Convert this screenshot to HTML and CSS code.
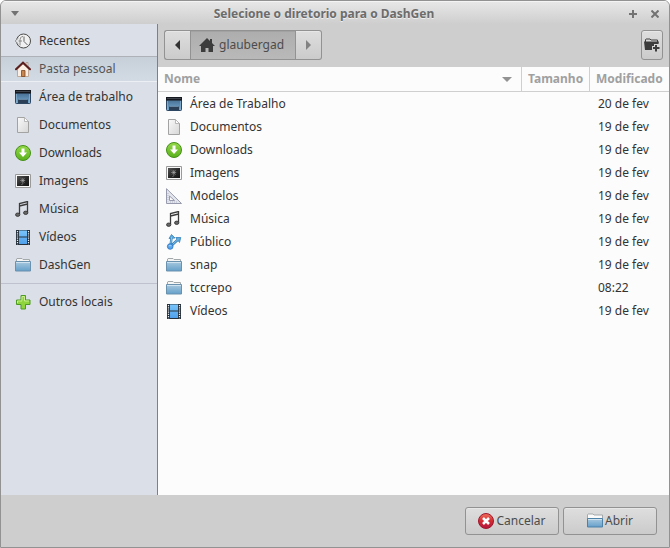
FILE: index.html
```html
<!DOCTYPE html>
<html lang="pt-BR">
<head>
<meta charset="utf-8">
<title>Selecione o diretorio para o DashGen</title>
<link rel="stylesheet" href="styles.css">
</head>
<body>
<svg class="sprite" width="0" height="0" aria-hidden="true">
  <defs>
    <linearGradient id="g-blue" x2="0" y2="1"><stop offset="0" stop-color="#3f6287"/><stop offset="1" stop-color="#74a9cf"/></linearGradient>
    <linearGradient id="g-folder" x2="0" y2="1"><stop offset="0" stop-color="#a9c9df"/><stop offset="1" stop-color="#65a0ca"/></linearGradient>
    <linearGradient id="g-green" x2="0" y2="1"><stop offset="0" stop-color="#97d94a"/><stop offset="1" stop-color="#58b01b"/></linearGradient>
    <linearGradient id="g-red" x2="0" y2="1"><stop offset="0" stop-color="#f0705c"/><stop offset=".5" stop-color="#d22c32"/><stop offset="1" stop-color="#b3153f"/></linearGradient>
    <linearGradient id="g-paper" x2="1" y2="1"><stop offset="0" stop-color="#fafafa"/><stop offset="1" stop-color="#d6d6d6"/></linearGradient>
    <linearGradient id="g-film" x2="0" y2="1"><stop offset="0" stop-color="#79c4fa"/><stop offset="1" stop-color="#4fa0ec"/></linearGradient>
    <linearGradient id="g-dark" x2="1" y2="1"><stop offset="0" stop-color="#555"/><stop offset=".5" stop-color="#292929"/><stop offset="1" stop-color="#151515"/></linearGradient>
  </defs>
  <symbol id="recent" viewBox="0 0 16 16">
    <circle cx="8.500" cy="8" r="7" fill="#f1f1f1" stroke="#4a4a4a"/>
    <path d="M9 3.500v5l3.500 3.500" fill="none" stroke="#666"/>
    <path d="M8 3.500C5.500 3.500 5 5.500 5 8v4.500M3 8h4" fill="none" stroke="#888"/>
    <path d="M3.500 5L0 8l3.500 3" fill="#e4e6ea" stroke="#888" stroke-width=".8"/>
  </symbol>
  <symbol id="home" viewBox="0 0 16 16">
    <path d="M11 1.500h2V7h-2z" fill="#e8d9cd" stroke="#9b8578" stroke-width=".6"/>
    <path d="M2.500 8L8 2.500 13.500 8v7.500h-11z" fill="#fbefe3" stroke="#b99b86" stroke-width=".8"/>
    <path d="M6.500 9.500h3.500v6H6.500z" fill="#c8854d" stroke="#7b4726" stroke-width=".8"/>
    <path d="M1 8.300L8 1.700l7 6.600" fill="none" stroke="#5d1f1d" stroke-width="2" stroke-linecap="round"/>
  </symbol>
  <symbol id="desktop" viewBox="0 0 16 16">
    <rect x=".5" y="1.500" width="15" height="13" rx=".8" fill="url(#g-blue)" stroke="#2d4763"/>
    <path d="M0 1h16v3.500H0z" fill="#15191f"/>
    <path d="M1 2.500h14" stroke="#50565f" stroke-width=".7"/>
    <path d="M1.500 5v9M14.500 5v9" stroke="#84afd0" stroke-width=".8"/>
    <path d="M3 10.500h10V14H3z" fill="#2b4057"/>
    <path d="M3.500 10.500h9" stroke="#7796b0" stroke-width=".7"/>
  </symbol>
  <symbol id="document" viewBox="0 0 16 16">
    <path d="M2.500.5h7l4 4v11h-11z" fill="url(#g-paper)" stroke="#a3a3a3"/>
    <path d="M9.500.8v3.700h3.700" fill="#fff" stroke="#aaa" stroke-width=".8"/>
  </symbol>
  <symbol id="download" viewBox="0 0 16 16">
    <circle cx="8" cy="8" r="7.500" fill="url(#g-green)" stroke="#459018"/>
    <path d="M6.500 3.500h3v4H12l-4 4.500-4-4.500h2.500z" fill="#fff"/>
  </symbol>
  <symbol id="image" viewBox="0 0 16 16">
    <path d="M.5 1.500h15v13H.5z" fill="#f8f8f8" stroke="#9a9a9a"/>
    <path d="M2 3h12v10H2z" fill="url(#g-dark)"/>
    <path d="M6 5.500l3.500 4M9.500 5.500L6 9.500M5.200 7.500h5M7.800 5v5.500L6.500 12" stroke="#b0b0b0" stroke-width=".6" fill="none"/>
  </symbol>
  <symbol id="music" viewBox="0 0 16 16">
    <path d="M4.500 13V2.500l8-2v10.700M4.500 5l8-2" fill="none" stroke="#3c3c3c" stroke-width="1.300"/>
    <ellipse cx="2.700" cy="13.700" rx="2.200" ry="1.700" fill="#666" stroke="#2c2c2c" stroke-width=".8"/>
    <ellipse cx="10.700" cy="11.800" rx="2.200" ry="1.700" fill="#666" stroke="#2c2c2c" stroke-width=".8"/>
  </symbol>
  <symbol id="video" viewBox="0 0 16 16">
    <path d="M1 1h14v15H1z" fill="#26313c"/>
    <path d="M4 1.500h8v6H4zM4 8.500h8V15H4z" fill="url(#g-film)"/>
    <path d="M2.500 2v13.500M13.500 2v13.500" stroke="#eee" stroke-width="1.200" stroke-dasharray="1.200 1"/>
  </symbol>
  <symbol id="folder" viewBox="0 0 16 16">
    <path d="M1.500 6V2l.5-.5h5L8 2.500h6.500V6z" fill="#f5f5f5" stroke="#a3a8ab"/>
    <path d="M.5 4.500h15v9.500H.5z" fill="url(#g-folder)" stroke="#6a91ad"/>
    <path d="M1 5.500h14" stroke="#cfe2ef"/>
  </symbol>
  <symbol id="open-folder" viewBox="0 0 16 16">
    <path d="M.5 8V1.500L1 1h5l1 1h8.500v6z" fill="#fafafa" stroke="#a3a8ab"/>
    <path d="M.5 5.500h15v8.500H.5z" fill="url(#g-folder)" stroke="#4c81a8"/>
    <path d="M1 6.500h14" stroke="#cfe2ef"/>
  </symbol>
  <symbol id="plus" viewBox="0 0 16 16">
    <path d="M6 1.500h4.500V6H15v4.500h-4.500V15H6v-4.500H1.500V6H6z" fill="#8fd43c" stroke="#4c9a24" stroke-linejoin="round"/>
    <path d="M7 6.500V2.500h2.500V7H14M2.500 9V7H7" fill="none" stroke="#c8f08d"/>
  </symbol>
  <symbol id="template" viewBox="0 0 16 16">
    <path fill-rule="evenodd" d="M.5.7v14.800h15zM3.500 8v4.500h5z" fill="#e4e6ee" stroke="#989bad"/>
    <path d="M2 5v8.500M4 14h7" stroke="#b4b7c5" stroke-dasharray="1 1"/>
  </symbol>
  <symbol id="share" viewBox="0 0 16 16">
    <path d="M4.500 12L5.500 4M5 12l6.500-6" stroke="#3a83b9" stroke-width="2.400"/>
    <path d="M3 4.500L5.500.500l3.500 3.500zM9.800 3.500h5L13.500 8.500z" fill="#5cabdf" stroke="#3a83b9" stroke-width=".8"/>
    <path d="M4.700 10L5.700 3M5 12l7.500-7" stroke="#83c6ec"/>
    <circle cx="4.200" cy="12.500" r="2.800" fill="#5aa6ed" stroke="#246fc0" stroke-width=".8"/>
    <path d="M2.800 11.700h2.700" stroke="#a8d3fa"/>
  </symbol>
  <symbol id="cancel" viewBox="0 0 16 16">
    <circle cx="8" cy="8" r="7.500" fill="url(#g-red)" stroke="#9f182d"/>
    <path d="M5 5l6 6M11 5l-6 6" stroke="#fff" stroke-width="2.500"/>
  </symbol>
  <symbol id="home-dark" viewBox="0 0 16 16">
    <path d="M8 1l3 3V2h2v4l3 3h-2v6H9.500v-4h-3v4H2V9H0z" fill="#3c3c3c"/>
  </symbol>
  <symbol id="new-folder" viewBox="0 0 16 16">
    <path d="M1.500 5V2.500L2 2h4l1 1h6.500v2" fill="none" stroke="#3c3c3c"/>
    <path d="M0 4.500h15L14.500 7H10v2H8v4H1z" fill="#3c3c3c"/>
    <path d="M11 8h2v2h2.500v2H13v2.500h-2V12H9v-2h2z" fill="#3c3c3c"/>
  </symbol>
</svg>

<div class="window">
  <header class="titlebar">
    <button class="window-button" aria-label="Menu da janela"><svg width="8" height="5" viewBox="0 0 8 5"><path d="M0 0h8L4 5z" fill="currentColor"/></svg></button>
    <h1>Selecione o diretorio para o DashGen</h1>
    <div class="window-actions">
      <button class="window-button" aria-label="Maximizar"><svg width="8" height="8" viewBox="0 0 8 8"><path d="M4 0v8M0 4h8" stroke="currentColor" stroke-width="2"/></svg></button>
      <button class="window-button" aria-label="Fechar"><svg width="8" height="8" viewBox="0 0 8 8"><path d="M.5.500l7 7M7.500.500l-7 7" stroke="currentColor" stroke-width="2"/></svg></button>
    </div>
  </header>

  <div class="content">
    <nav class="places" aria-label="Locais">
      <a href="#"><svg class="icon"><use href="#recent"/></svg>Recentes</a>
      <a href="#" class="current" aria-current="page"><svg class="icon"><use href="#home"/></svg>Pasta pessoal</a>
      <a href="#"><svg class="icon"><use href="#desktop"/></svg>Área de trabalho</a>
      <a href="#"><svg class="icon"><use href="#document"/></svg>Documentos</a>
      <a href="#"><svg class="icon"><use href="#download"/></svg>Downloads</a>
      <a href="#"><svg class="icon"><use href="#image"/></svg>Imagens</a>
      <a href="#"><svg class="icon"><use href="#music"/></svg>Música</a>
      <a href="#"><svg class="icon"><use href="#video"/></svg>Vídeos</a>
      <a href="#"><svg class="icon"><use href="#folder"/></svg>DashGen</a>
      <hr>
      <a href="#"><svg class="icon"><use href="#plus"/></svg>Outros locais</a>
    </nav>

    <main class="browser">
      <div class="toolbar">
        <div class="path-bar">
          <button class="path-arrow" aria-label="Anterior"><svg width="5" height="10" viewBox="0 0 5 10"><path d="M5 0v10L0 5z" fill="currentColor"/></svg></button>
          <button class="path-current"><svg class="icon"><use href="#home-dark"/></svg>glaubergad</button>
          <button class="path-arrow" aria-label="Próximo" disabled><svg width="5" height="10" viewBox="0 0 5 10"><path d="M0 0v10l5-5z" fill="currentColor"/></svg></button>
        </div>
        <button class="create-folder" aria-label="Criar pasta"><svg class="icon"><use href="#new-folder"/></svg></button>
      </div>

      <div class="file-list">
        <table>
          <colgroup><col><col class="col-size"><col class="col-date"></colgroup>
          <thead>
            <tr>
              <th scope="col" aria-sort="ascending"><div class="sorted">Nome<svg width="10" height="5" viewBox="0 0 10 5"><path d="M0 0h10L5 5z" fill="currentColor"/></svg></div></th>
              <th scope="col">Tamanho</th>
              <th scope="col">Modificado</th>
            </tr>
          </thead>
          <tbody>
            <tr><td><div class="file"><svg class="icon"><use href="#desktop"/></svg>Área de Trabalho</div></td><td></td><td>20 de fev</td></tr>
            <tr><td><div class="file"><svg class="icon"><use href="#document"/></svg>Documentos</div></td><td></td><td>19 de fev</td></tr>
            <tr><td><div class="file"><svg class="icon"><use href="#download"/></svg>Downloads</div></td><td></td><td>19 de fev</td></tr>
            <tr><td><div class="file"><svg class="icon"><use href="#image"/></svg>Imagens</div></td><td></td><td>19 de fev</td></tr>
            <tr><td><div class="file"><svg class="icon"><use href="#template"/></svg>Modelos</div></td><td></td><td>19 de fev</td></tr>
            <tr><td><div class="file"><svg class="icon"><use href="#music"/></svg>Música</div></td><td></td><td>19 de fev</td></tr>
            <tr><td><div class="file"><svg class="icon"><use href="#share"/></svg>Público</div></td><td></td><td>19 de fev</td></tr>
            <tr><td><div class="file"><svg class="icon"><use href="#folder"/></svg>snap</div></td><td></td><td>19 de fev</td></tr>
            <tr><td><div class="file"><svg class="icon"><use href="#folder"/></svg>tccrepo</div></td><td></td><td>08:22</td></tr>
            <tr><td><div class="file"><svg class="icon"><use href="#video"/></svg>Vídeos</div></td><td></td><td>19 de fev</td></tr>
          </tbody>
        </table>
      </div>
    </main>
  </div>

  <footer class="actions">
    <button class="action"><svg class="icon"><use href="#cancel"/></svg>Cancelar</button>
    <button class="action"><svg class="icon"><use href="#open-folder"/></svg>Abrir</button>
  </footer>
</div>
</body>
</html>
```

FILE: styles.css
```css
* {
  box-sizing: border-box;
}

body {
  margin: 0;
  background: #fff;
  color: #333;
  font: 12px/16px "Noto Sans", sans-serif;
}

button {
  margin: 0;
  padding: 0;
  color: #4c4c4c;
  font: inherit;
}

.sprite {
  display: block;
}

.icon {
  flex: none;
  width: 16px;
  height: 16px;
}

.window {
  display: flex;
  flex-direction: column;
  min-height: 100vh;
  overflow: hidden;
  border: 1px solid #929292;
  border-radius: 6px 6px 0 0;
  background: #cecece;
}

.titlebar {
  display: grid;
  grid-template-columns: auto 1fr auto;
  align-items: center;
  height: 23px;
  padding: 2px 10px 0;
  background: linear-gradient(#e8e8e8, #cecece);
  box-shadow: inset 0 1px #f4f4f4;
}

.titlebar h1 {
  margin: 0;
  color: #6c6c6c;
  font-size: 12px;
  font-weight: 700;
  text-align: center;
  text-shadow: 0 1px #eee;
}

.window-button {
  display: flex;
  border: 0;
  background: none;
  color: #737373;
}

.window-actions {
  display: flex;
  gap: 14px;
}

.content {
  display: flex;
  flex: 1;
}

.places {
  flex: none;
  width: 157px;
  padding-top: 3px;
  border-right: 1px solid #808080;
  background: #dbdfe7;
}

.places a {
  display: flex;
  align-items: center;
  gap: 8px;
  height: 28px;
  padding-left: 14px;
  color: #333;
  text-decoration: none;
}

.places .current {
  height: 26px;
  margin: 1px 0;
  border-top: 1px solid #aeb2b8;
  border-bottom: 1px solid #eceff3;
  background: linear-gradient(#c7d0d9, #d3dae3);
  color: #555;
}

.places hr {
  height: 1px;
  margin: 4px 0;
  border: 0;
  background: #bfc2ce;
}

.browser {
  display: flex;
  flex: 1;
  flex-direction: column;
  min-width: 0;
}

.toolbar {
  display: flex;
  justify-content: space-between;
  padding: 6px 6px 7px;
}

.toolbar button,
.action {
  display: flex;
  align-items: center;
  justify-content: center;
  border: 1px solid #929292;
  border-radius: 3px;
  background: linear-gradient(#dedede, #cbcbcb);
  box-shadow: inset 0 1px #e7e7e7;
}

.toolbar button {
  height: 30px;
}

.path-bar {
  display: flex;
}

.path-bar .path-arrow {
  width: 26px;
  color: #333;
}

.path-bar .path-arrow:first-child {
  border-right: 0;
  border-radius: 3px 0 0 3px;
}

.path-bar .path-arrow:last-child {
  border-left: 0;
  border-radius: 0 3px 3px 0;
}

.path-bar .path-arrow:disabled {
  color: #828282;
}

.toolbar .path-current {
  gap: 4px;
  padding: 0 11px 0 8px;
  border-radius: 0;
  background: linear-gradient(#adadad, #b9b9b9);
  box-shadow: inset 0 1px #a2a2a2;
}

.toolbar .create-folder {
  width: 22px;
}

.file-list {
  flex: 1;
  background: #fcfcfc;
}

table {
  width: 100%;
  table-layout: fixed;
  border-collapse: separate;
  border-spacing: 0;
}

.col-size {
  width: 68px;
}

.col-date {
  width: 79px;
}

th {
  height: 25px;
  padding: 0 6px;
  border-right: 1px solid #cfcfcf;
  border-bottom: 1px solid #cfcfcf;
  color: #a0a0a0;
  font-weight: 700;
  text-align: left;
}

th:last-child {
  padding-right: 0;
  border-right: 0;
}

.sorted {
  display: flex;
  align-items: center;
  justify-content: space-between;
  padding-right: 3px;
}

.sorted svg {
  color: #929292;
}

td {
  height: 23px;
  padding: 0 8px;
}

.file {
  display: flex;
  align-items: center;
  gap: 8px;
}

.actions {
  display: flex;
  justify-content: flex-end;
  gap: 4px;
  padding: 12px;
}

.action {
  gap: 2px;
  width: 94px;
  height: 28px;
}
```
